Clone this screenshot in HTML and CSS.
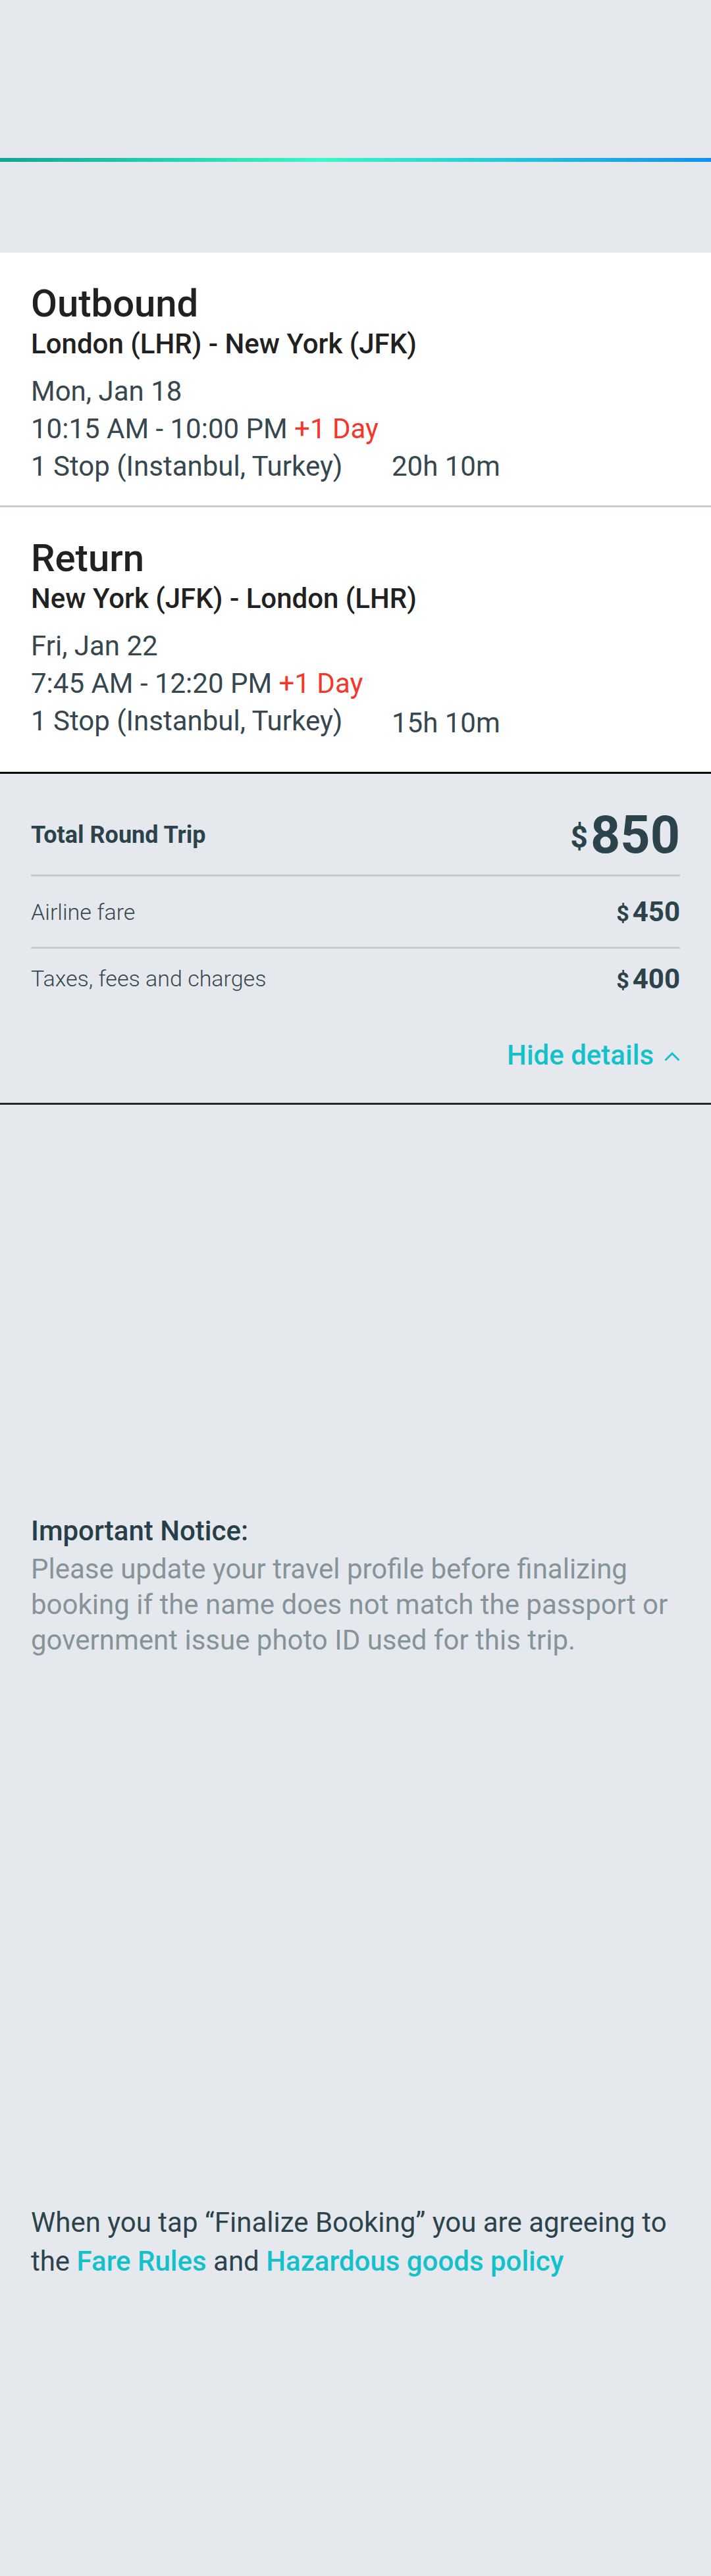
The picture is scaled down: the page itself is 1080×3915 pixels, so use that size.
FILE: index.html
```html
<!DOCTYPE html>
<html lang="en">
<head>
<meta charset="utf-8">
<title>Trip summary</title>
<link rel="stylesheet" href="styles.css">
</head>
<body>
<div class="page">
  <header class="hero"><div class="accent"></div></header>

  <section class="leg">
    <h2 class="leg-title">Outbound</h2>
    <p class="leg-route">London (LHR) - New York (JFK)</p>
    <div class="leg-info">
      <p>Mon, Jan 18</p>
      <p>10:15 AM - 10:00 PM <span class="plus">+1 Day</span></p>
      <p class="stop-row"><span class="stops">1 Stop (Instanbul, Turkey)</span><span class="dur">20h 10m</span></p>
    </div>
  </section>

  <section class="leg leg-return">
    <h2 class="leg-title">Return</h2>
    <p class="leg-route">New York (JFK) - London (LHR)</p>
    <div class="leg-info">
      <p>Fri, Jan 22</p>
      <p>7:45 AM - 12:20 PM <span class="plus">+1 Day</span></p>
      <p class="stop-row"><span class="stops">1 Stop (Instanbul, Turkey)</span><span class="dur">15h 10m</span></p>
    </div>
  </section>

  <section class="fare">
    <div class="fare-total">
      <span class="total-label">Total Round Trip</span>
      <span class="total-price"><span class="cur-lg">$</span><span class="amt-lg">850</span></span>
    </div>
    <div class="fare-row">
      <span class="fare-label">Airline fare</span>
      <span class="fare-price"><span class="cur-sm">$</span><span class="amt-sm">450</span></span>
    </div>
    <div class="fare-row fare-row-last">
      <span class="fare-label">Taxes, fees and charges</span>
      <span class="fare-price"><span class="cur-sm">$</span><span class="amt-sm">400</span></span>
    </div>
    <div class="fare-toggle">
      <span class="toggle-text">Hide details</span>
      <svg class="chevron" width="24" height="14" viewBox="0 0 24 14" aria-hidden="true">
        <path d="M1.5 12.5 L12 2 L22.5 12.5" fill="none" stroke="#14c1cb" stroke-width="3"/>
      </svg>
    </div>
  </section>

  <section class="notice">
    <h3 class="notice-title">Important Notice:</h3>
    <p class="notice-body">Please update your travel profile before finalizing booking if the name does not match the passport or government issue photo ID used for this trip.</p>
  </section>

  <p class="agree">When you tap “Finalize Booking” you are agreeing to the <span class="link">Fare Rules</span> and <span class="link">Hazardous goods policy</span></p>
</div>
</body>
</html>
```

FILE: styles.css
```css
html, body {
  margin: 0;
  padding: 0;
}

body {
  background: #e5e9ee;
  font-family: Roboto, "Noto Sans", "Liberation Sans", sans-serif;
  color: #37474f;
}

.page {
  width: 1080px;
  min-height: 3915px;
}

.hero {
  padding: 240px 0 138px;
}

.accent {
  height: 6px;
  background: linear-gradient(90deg, #10a595 0%, #3cf7c7 45%, #1290f2 100%);
}

/* flight legs */
.leg {
  background: #ffffff;
  padding: 43px 47px 31px;
  border-bottom: 3px solid #c8d0d4;
}

.leg-return {
  padding-bottom: 46px;
  border-bottom-color: #000000;
}

.leg-title {
  margin: 0;
  font-size: 58px;
  font-weight: 500;
  line-height: 68px;
  color: #212121;
}

.leg-route {
  margin: 3px 0 0;
  font-size: 42px;
  font-weight: 500;
  line-height: 49px;
  color: #212121;
}

.leg-info {
  margin-top: 19px;
  font-size: 42px;
  line-height: 57px;
  color: #37474f;
}

.leg-info p {
  margin: 0;
}

.plus {
  color: #f4362c;
}

.stop-row {
  display: flex;
  align-items: flex-start;
}

.stops {
  width: 548px;
  flex: none;
}

.leg-return .dur {
  padding-top: 3px;
}

/* fare summary */
.fare {
  padding: 0 47px;
  border-bottom: 3px solid #25292c;
}

.fare-total {
  display: flex;
  justify-content: space-between;
  align-items: center;
  padding: 47px 0 14px;
  border-bottom: 3px solid #c5cdd0;
}

.total-label {
  font-size: 36px;
  font-weight: 700;
  color: #2c434c;
}

.total-price {
  font-size: 79px;
  line-height: 92px;
  font-weight: 700;
  color: #2c434c;
}

.cur-lg {
  font-size: 46px;
  line-height: 46px;
  vertical-align: 8px;
  margin-right: 4px;
}

.fare-row {
  display: flex;
  justify-content: space-between;
  align-items: center;
  height: 107px;
  border-bottom: 3px solid #c5cdd0;
}

.fare-row-last {
  height: 90px;
  border-bottom: none;
}

.fare-label {
  font-size: 34px;
  font-weight: 300;
  color: #37474f;
}

.fare-price {
  font-size: 42px;
  font-weight: 700;
  color: #2c434c;
}

.cur-sm {
  font-size: 34px;
  margin-right: 5px;
}

.fare-toggle {
  display: flex;
  justify-content: flex-end;
  align-items: center;
  padding: 47px 0 48px;
  font-size: 42px;
  line-height: 49px;
  font-weight: 500;
  color: #14c1cb;
}

.chevron {
  display: block;
  margin: 4px 0 0 16px;
}

/* notice */
.notice {
  padding: 0 47px;
  margin-top: 621px;
}

.notice-title {
  margin: 0 0 4px;
  font-size: 42px;
  line-height: 54px;
  font-weight: 500;
  color: #263f48;
}

.notice-body {
  margin: 0;
  font-size: 42px;
  line-height: 54px;
  color: #86949a;
}

.agree {
  margin: 828px 0 0;
  padding: 0 47px;
  font-size: 42px;
  line-height: 59px;
  color: #2c434c;
}

.link {
  color: #14c1cb;
  font-weight: 500;
}
```
